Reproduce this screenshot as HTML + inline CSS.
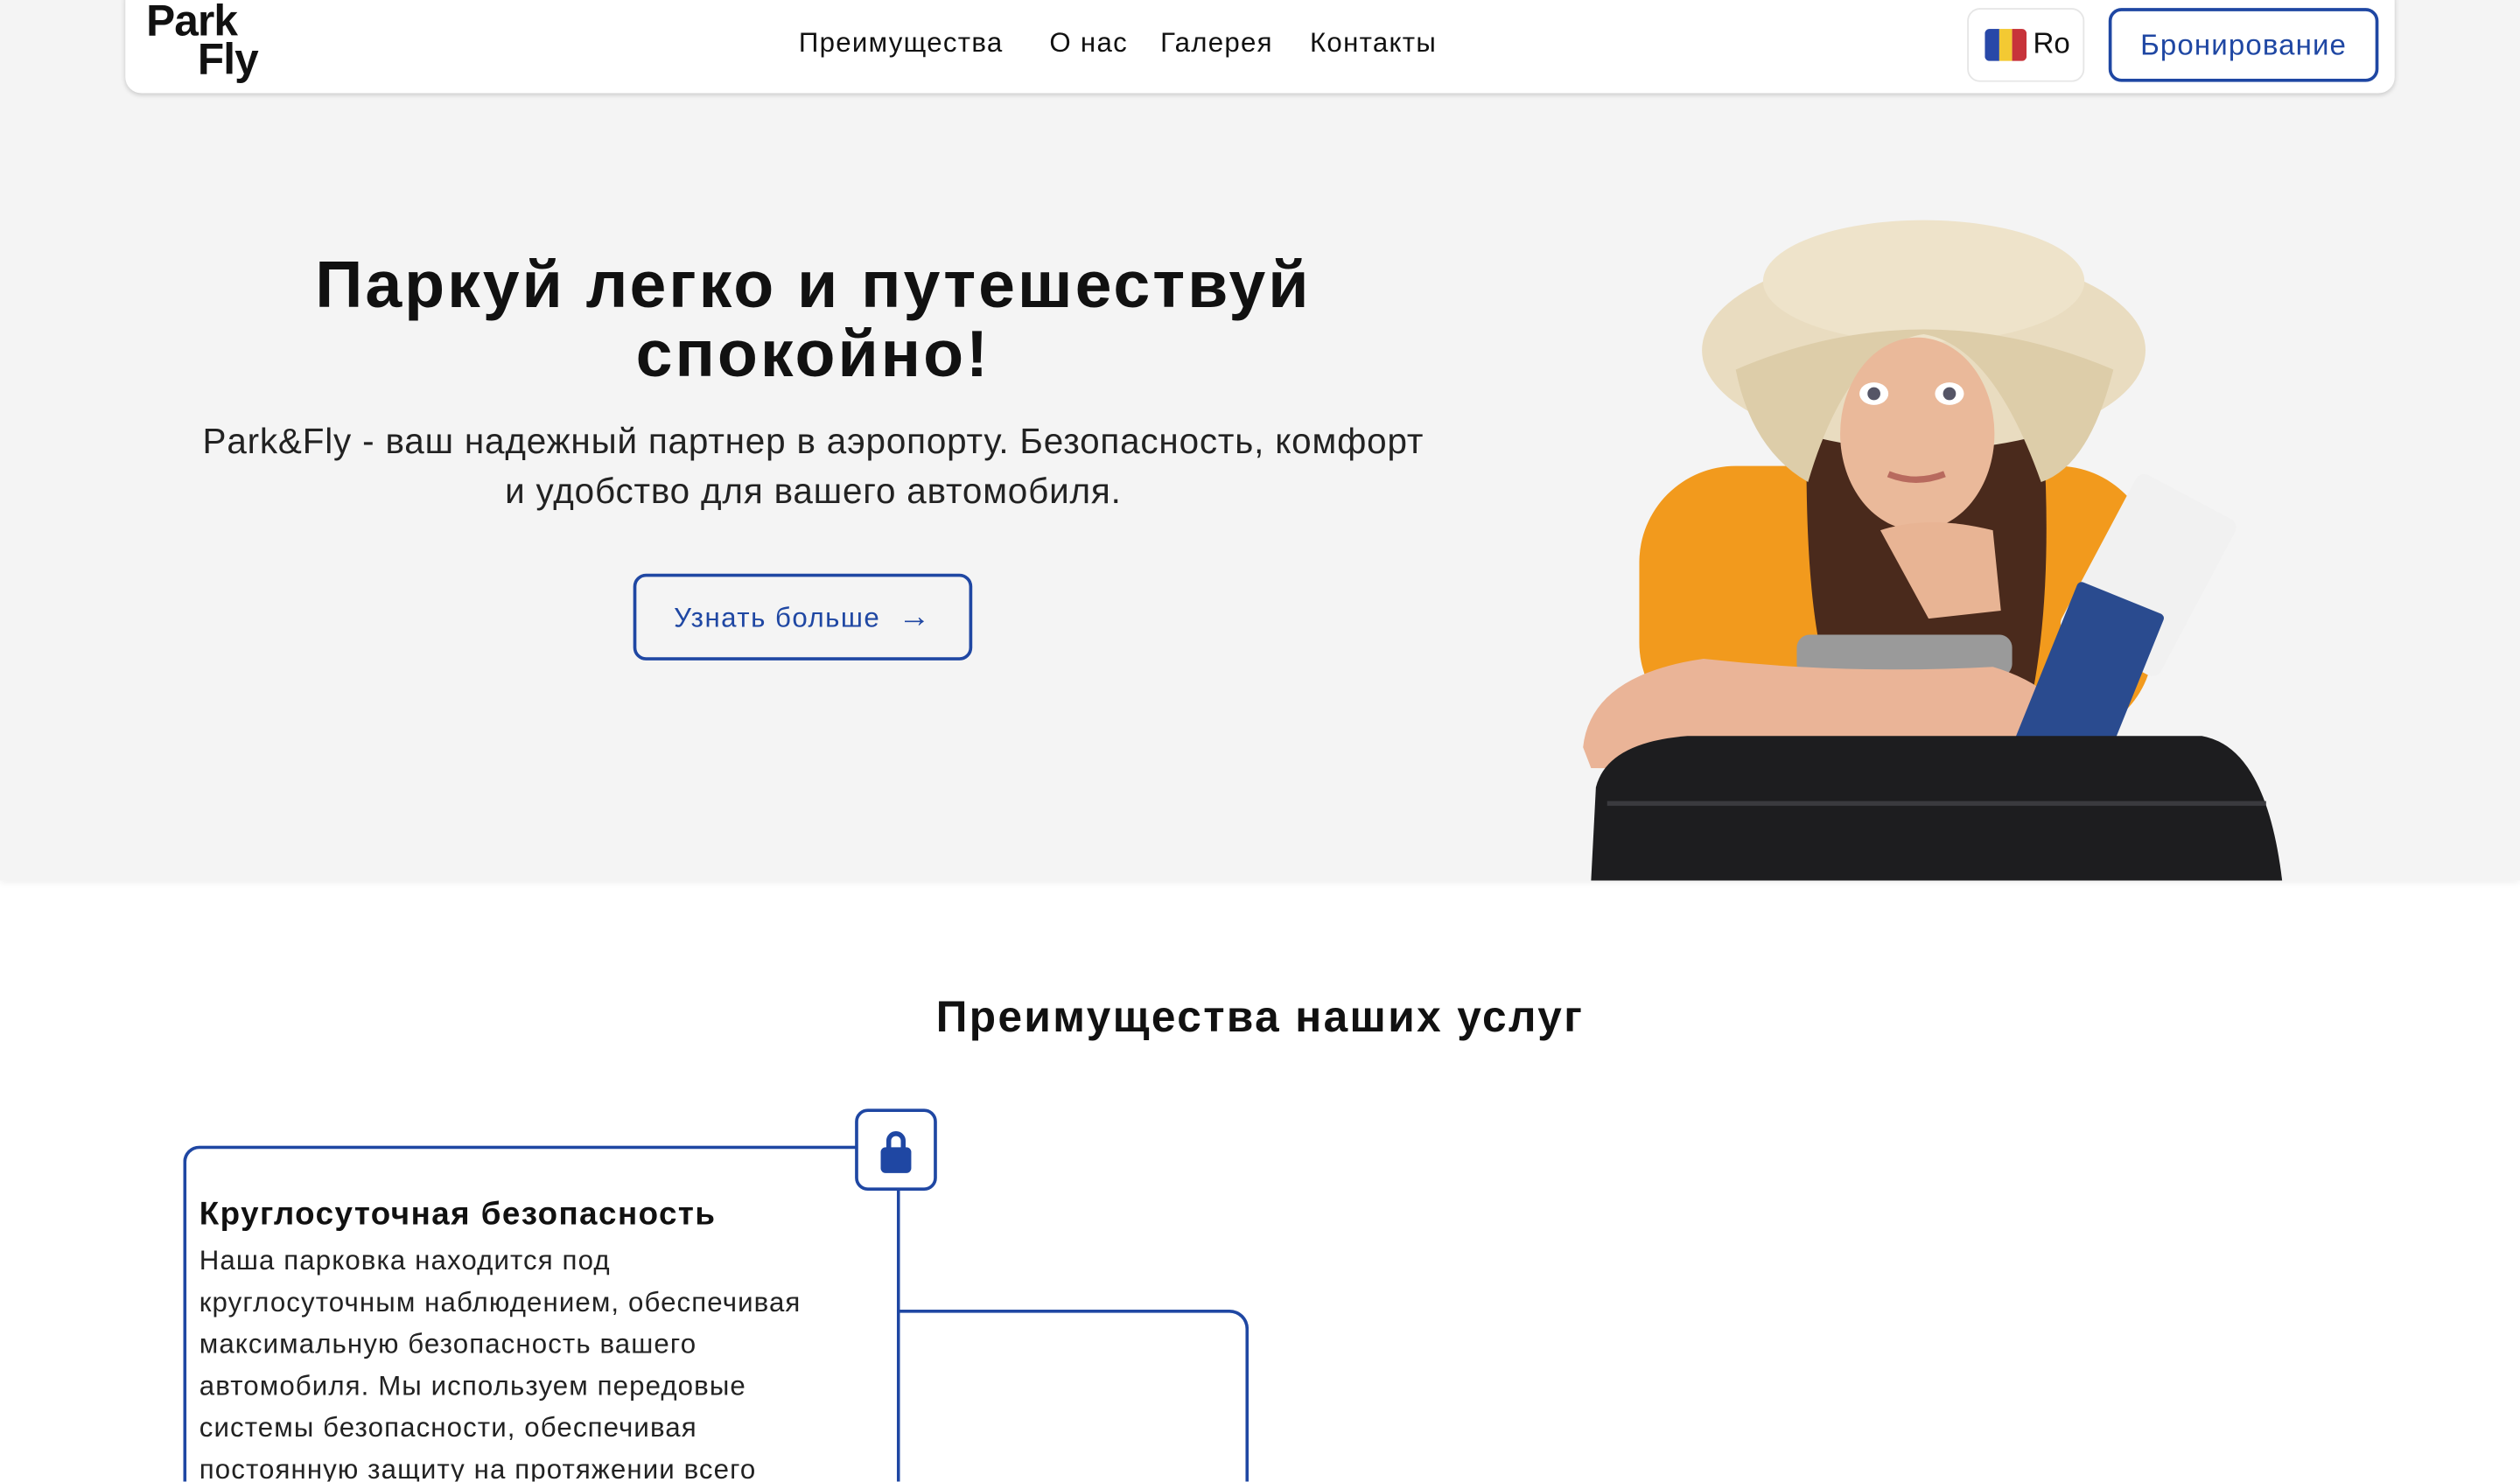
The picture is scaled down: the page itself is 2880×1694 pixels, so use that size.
<!DOCTYPE html>
<html><head><meta charset="utf-8"><style>
html,body{margin:0;padding:0;width:2880px;height:1694px;overflow:hidden;background:#fff}
#w{width:1568px;height:922px;overflow:hidden;transform:scale(1.836735);transform-origin:0 0;position:relative;font-family:"Liberation Sans","DejaVu Sans",sans-serif;color:#111}
.hero{position:absolute;left:0;top:0;width:1568px;height:548px;background:#f4f4f4;box-shadow:0 2px 4px rgba(0,0,0,.06)}
.hdr{position:absolute;left:78px;top:-10px;width:1412px;height:68px;background:#fff;border-radius:10px;box-shadow:0 1px 3px rgba(0,0,0,.18)}
.abs{position:absolute}
.nav{position:absolute;top:17px;font-size:17px;font-weight:500;color:#111;letter-spacing:.7px}
.btn{position:absolute;border:2px solid #1f47a3;border-radius:8px;color:#1f47a3;box-sizing:border-box;text-align:center}
</style></head><body><div id="w">
<div class="hero"></div>
<svg class="abs" style="left:0;top:0" width="1568" height="548" viewBox="0 0 1568 548">
 <rect x="1020" y="290" width="320" height="170" rx="60" fill="#f29a1d"/>
 <path d="M1125 230 Q1120 380 1140 430 L1265 430 Q1280 350 1268 230 Z" fill="#4a2a1c"/>
 <ellipse cx="1197" cy="218" rx="138" ry="62" fill="#e9dcc0"/>
 <ellipse cx="1197" cy="175" rx="100" ry="38" fill="#eee3ca"/>
 <path d="M1080 230 Q1197 180 1315 230 Q1300 290 1270 300 Q1240 215 1197 208 Q1150 215 1125 300 Q1090 280 1080 230Z" fill="#ddcda9"/>
 <ellipse cx="1193" cy="270" rx="48" ry="60" fill="#eab99a"/>
 <path d="M1170 330 Q1200 320 1240 330 L1245 380 L1200 385 Z" fill="#e8b494"/>
 <ellipse cx="1166" cy="245" rx="9" ry="7" fill="#fff"/><circle cx="1166" cy="245" r="4" fill="#556"/>
 <ellipse cx="1213" cy="245" rx="9" ry="7" fill="#fff"/><circle cx="1213" cy="245" r="4" fill="#556"/>
 <path d="M1175 295 Q1192 302 1210 295" stroke="#b86a5e" stroke-width="4" fill="none"/>
 <rect x="1118" y="395" width="134" height="26" rx="8" fill="#9a9a9a"/>
 <rect x="1125" y="418" width="10" height="40" fill="#777"/><rect x="1236" y="418" width="10" height="40" fill="#777"/>
 <path d="M985 465 Q990 420 1060 410 Q1150 420 1240 415 Q1290 430 1295 470 L1240 480 L990 478 Z" fill="#eab497"/>
 <g transform="rotate(28 1330 360)"><rect x="1300" y="300" width="70" height="110" rx="6" fill="#f1f1f1"/></g>
 <g transform="rotate(22 1300 420)"><rect x="1272" y="368" width="58" height="115" rx="3" fill="#2a4b8f"/></g>
 <path d="M990 548 L993 490 Q1000 462 1050 458 L1370 458 Q1410 465 1420 548 Z" fill="#1d1d1f"/>
 <path d="M1000 500 L1410 500" stroke="#3a3a3e" stroke-width="3"/>
</svg>
<div class="hdr"></div>
<div class="abs" style="left:91px;top:1px;font-size:27px;font-weight:900;line-height:24px;letter-spacing:-0.5px">Park<br><span style="margin-left:32px">Fly</span></div>
<div class="nav" style="left:497px">Преимущества</div>
<div class="nav" style="left:653px">О нас</div>
<div class="nav" style="left:722px">Галерея</div>
<div class="nav" style="left:815px">Контакты</div>
<div class="abs" style="left:1224px;top:5px;width:73px;height:46px;border:1px solid #e6e6e6;border-radius:8px;box-sizing:border-box">
 <div class="abs" style="left:10px;top:12px;width:26px;height:20px;border-radius:3px;overflow:hidden;display:flex"><div style="flex:1;background:#2848a8"></div><div style="flex:1;background:#f3c933"></div><div style="flex:1;background:#c7333a"></div></div>
 <div class="abs" style="left:40px;top:11px;font-size:18px">Ro</div>
</div>
<div class="btn" style="left:1312px;top:5px;width:168px;height:46px;line-height:42px;font-size:18px;border-width:2.5px;letter-spacing:.6px">Бронирование</div>
<div class="abs" style="left:56px;top:156px;width:900px;text-align:center;font-size:41px;font-weight:900;line-height:43px;letter-spacing:1.6px">Паркуй легко и путешествуй<br>спокойно!</div>
<div class="abs" style="left:56px;top:259px;width:900px;text-align:center;font-size:22px;line-height:31px;color:#222;letter-spacing:.45px">Park&amp;Fly - ваш надежный партнер в аэропорту. Безопасность, комфорт<br>и удобство для вашего автомобиля.</div>
<div class="btn" style="left:394px;top:357px;width:211px;height:54px;line-height:50px;font-size:17px;font-weight:500;letter-spacing:.8px">Узнать больше &nbsp;<span style="font-size:20px">→</span></div>
<div class="abs" style="left:0;top:618px;width:1568px;text-align:center;font-size:27px;font-weight:800;letter-spacing:1.3px">Преимущества наших услуг</div>
<div class="abs" style="left:114px;top:713px;width:446px;height:260px;border:2px solid #1f47a3;border-bottom:none;border-radius:10px 0 0 0;box-sizing:border-box"></div>
<div class="abs" style="left:559px;top:815px;width:218px;height:200px;border:2px solid #1f47a3;border-left:none;border-bottom:none;border-radius:0 12px 0 0;box-sizing:border-box"></div>
<div class="abs" style="left:532px;top:690px;width:51px;height:51px;border:2px solid #1f47a3;border-radius:8px;background:#fff;box-sizing:border-box">
 <svg width="47" height="47" viewBox="0 0 47 47"><path d="M19 23 V18 a4.5 4.5 0 0 1 9 0 V23" stroke="#1f47a3" stroke-width="3" fill="none"/><rect x="14" y="22" width="19" height="16" rx="3" fill="#1f47a3"/></svg>
</div>
<div class="abs" style="left:124px;top:745px;font-size:20px;font-weight:700;letter-spacing:.8px">Круглосуточная безопасность</div>
<div class="abs" style="left:124px;top:772px;width:425px;font-size:17px;line-height:26px;color:#222;letter-spacing:.6px">Наша парковка находится под<br>круглосуточным наблюдением, обеспечивая<br>максимальную безопасность вашего<br>автомобиля. Мы используем передовые<br>системы безопасности, обеспечивая<br>постоянную защиту на протяжении всего</div>
</div></body></html>
